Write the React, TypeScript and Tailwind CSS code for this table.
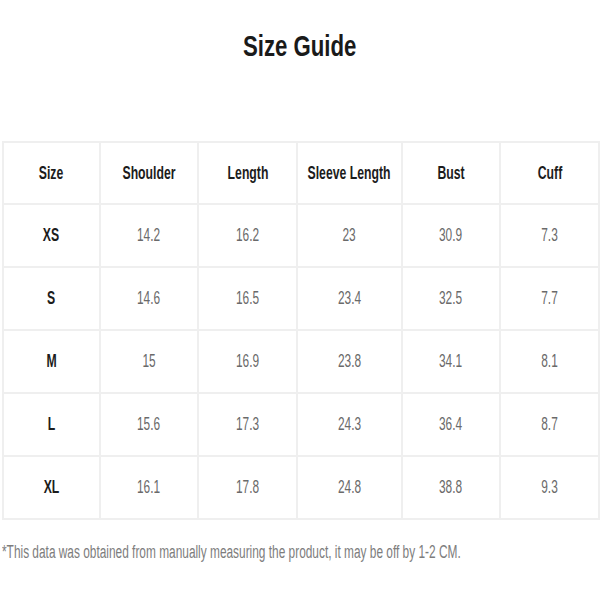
const headers = ["Size", "Shoulder", "Length", "Sleeve Length", "Bust", "Cuff"];

const rows = [
  ["XS", "14.2", "16.2", "23", "30.9", "7.3"],
  ["S", "14.6", "16.5", "23.4", "32.5", "7.7"],
  ["M", "15", "16.9", "23.8", "34.1", "8.1"],
  ["L", "15.6", "17.3", "24.3", "36.4", "8.7"],
  ["XL", "16.1", "17.8", "24.8", "38.8", "9.3"],
];

const font = { fontFamily: '"Liberation Sans", Arial, sans-serif' };

// narrow text: the source image is squeezed horizontally
function Narrow({ children, bold }: { children: React.ReactNode; bold?: boolean }) {
  return (
    <div className="flex justify-center">
      <span
        className={
          bold
            ? "inline-block shrink-0 scale-x-[0.68] whitespace-nowrap text-[18px] font-bold text-[#1c1c1c]"
            : "inline-block shrink-0 scale-x-[0.66] whitespace-nowrap text-[18px] text-[#6a6a6a]"
        }
      >
        {children}
      </span>
    </div>
  );
}

export default function App() {
  return (
    <div className="h-[600px] w-[600px] overflow-hidden bg-white" style={font}>
      <div className="flex justify-center pt-[27px]">
        <h1 className="inline-block shrink-0 scale-x-[0.74] whitespace-nowrap text-[30px] font-bold leading-[38px] text-[#1a1a1a]">
          Size Guide
        </h1>
      </div>
      <div className="ml-[2px] mt-[76px] w-[596px]">
        <table className="w-full table-fixed border-collapse">
          <colgroup>
            <col className="w-[97px]" />
            <col className="w-[98px]" />
            <col className="w-[99px]" />
            <col className="w-[105px]" />
            <col className="w-[98px]" />
            <col className="w-[99px]" />
          </colgroup>
          <thead>
            <tr className="h-[62px]">
              {headers.map((h) => (
                <th key={h} className="border-2 border-[#efefef] p-0">
                  <Narrow bold>{h}</Narrow>
                </th>
              ))}
            </tr>
          </thead>
          <tbody>
            {rows.map((r) => (
              <tr key={r[0]} className="h-[63px]">
                {r.map((c, i) => (
                  <td key={i} className="border-2 border-[#efefef] p-0">
                    <Narrow bold={i === 0}>{c}</Narrow>
                  </td>
                ))}
              </tr>
            ))}
          </tbody>
        </table>
      </div>
      <p className="mt-[19px] pl-[2px]">
        <span className="inline-block origin-left scale-x-[0.66] whitespace-nowrap text-[18px] text-[#7d7d7d]">
          *This data was obtained from manually measuring the product, it may be off by 1-2 CM.
        </span>
      </p>
    </div>
  );
}
